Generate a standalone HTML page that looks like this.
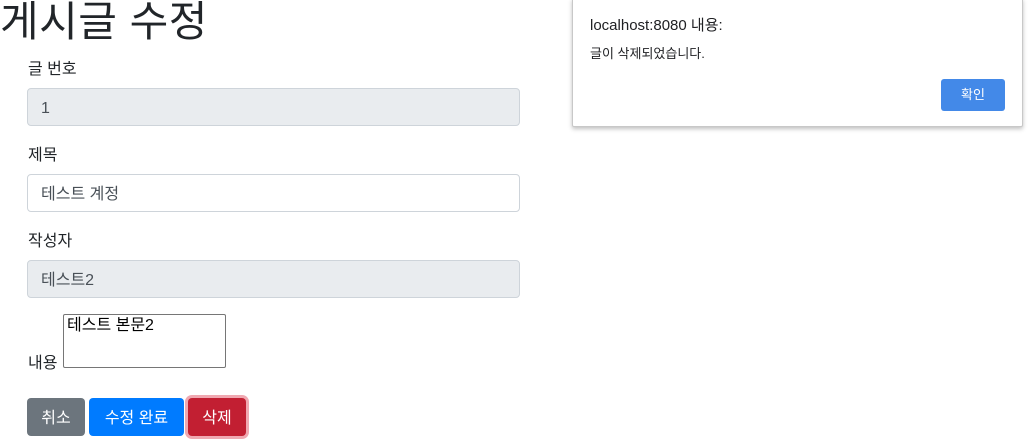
<!DOCTYPE html>
<html><head><meta charset="utf-8"><style>
body{margin:0;width:1034px;height:447px;overflow:hidden;background:#fff;font-family:"Liberation Sans","Noto Sans CJK KR",sans-serif;color:#212529;position:relative}
.a{position:absolute}
h1{position:absolute;left:0;top:-4px;margin:0;font-size:42px;font-weight:400;line-height:52px;letter-spacing:0.5px}
.lbl{position:absolute;left:28px;font-size:16px;line-height:20px}
.inp{position:absolute;left:27px;height:36px;border:1px solid #ced4da;border-radius:4px;font-size:16px;line-height:40px;padding-left:13px;box-sizing:content-box;width:478px}
.ro{background:#e9ecef;color:#495057}
.btn{position:absolute;top:398px;height:38px;border-radius:4px;color:#fff;font-size:16px;line-height:42px;text-align:center}
</style></head><body>
<h1>게시글 수정</h1>
<div class="lbl" style="top:60px">글 번호</div>
<div class="inp ro" style="top:88px">1</div>
<div class="lbl" style="top:146px">제목</div>
<div class="inp" style="top:174px;color:#495057">테스트 계정</div>
<div class="lbl" style="top:232px">작성자</div>
<div class="inp ro" style="top:260px">테스트2</div>
<div class="lbl" style="top:354px">내용</div>
<div class="a" style="left:63px;top:314px;border:1px solid #767676;border-radius:2px;font-size:16px;line-height:22px;padding:0 0 0 3px;box-sizing:border-box;width:163px;height:54px;color:#000">테스트 본문2</div>
<div class="btn" style="left:27px;width:58px;background:#6c757d">취소</div>
<div class="btn" style="left:89px;width:95px;background:#007bff">수정 완료</div>
<div class="btn" style="left:188px;width:58px;background:#c21f32;box-shadow:0 0 0 3px #f0a8b1">삭제</div>
<div class="a" style="left:572px;top:-2px;width:449px;height:127px;background:#fff;border:1px solid #c8c8c8;box-shadow:0 2px 4px rgba(0,0,0,.25);border-radius:2px">
<div class="a" style="left:17px;top:15px;font-size:15px;color:#202124">localhost:8080 내용:</div>
<div class="a" style="left:17px;top:44px;font-size:13px;color:#202124">글이 삭제되었습니다.</div>
<div class="a" style="left:368px;top:80px;width:64px;height:32px;background:#4389e8;border-radius:3px;color:#fff;font-size:13px;line-height:32px;text-align:center">확인</div>
</div>
</body></html>
